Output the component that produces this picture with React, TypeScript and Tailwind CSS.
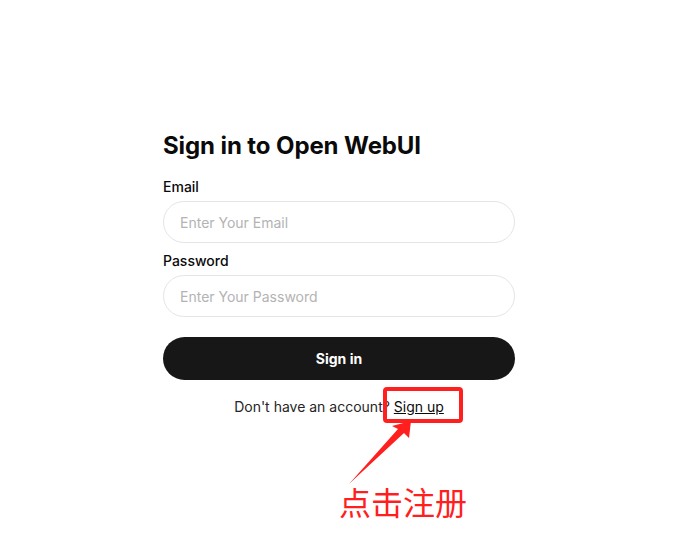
export default function App() {
	return (
		<div className="relative w-full h-[541px] bg-white font-['Inter',sans-serif] text-[#0a0a0a]">
			<div className="flex justify-center pt-[130px] pl-[2px]">
				<div className="w-[352px] flex flex-col">
					<h1 className="text-2xl font-bold leading-8 tracking-[-0.1px]">Sign in to Open WebUI</h1>
					<div className="flex flex-col mt-[15px]">
						<label className="text-sm font-medium leading-5 mb-[4px]">Email</label>
						<input
							type="email"
							placeholder="Enter Your Email"
							className="h-[42px] w-full px-[16px] rounded-full border border-[#e5e5e5] text-sm outline-none placeholder:text-[#b3b3b3]"
						/>
					</div>
					<div className="flex flex-col mt-[8px]">
						<label className="text-sm font-medium leading-5 mb-[4px]">Password</label>
						<input
							type="password"
							placeholder="Enter Your Password"
							className="h-[42px] w-full px-[16px] rounded-full border border-[#e5e5e5] text-sm outline-none placeholder:text-[#b3b3b3]"
						/>
					</div>
					<button className="mt-[20px] h-[43px] w-full rounded-full bg-[#171717] text-white text-sm font-bold">
						Sign in
					</button>
					<div className="mt-[17px] text-center text-sm leading-5 text-[#262626]">
						Don't have an account? <button className="underline text-[#0a0a0a]">Sign up</button>
					</div>
				</div>
			</div>

			{/* annotation overlay */}
			<div className="absolute left-[383px] top-[387px] w-[80px] h-[36px] border-4 border-[#ff1f1f] rounded-[4px]" />
			<svg className="absolute left-0 top-0 pointer-events-none" width="676" height="541" viewBox="0 0 676 541">
				<polygon points="349,484 398,429 392,426 411,421 409,438 404,433" fill="#ff1f1f" />
			</svg>
			<div className="absolute left-[339px] top-[481px] text-[32px] leading-[40px] text-[#ff1f1f] font-['Noto_Sans_CJK_SC',sans-serif]">
				点击注册
			</div>
		</div>
	);
}
